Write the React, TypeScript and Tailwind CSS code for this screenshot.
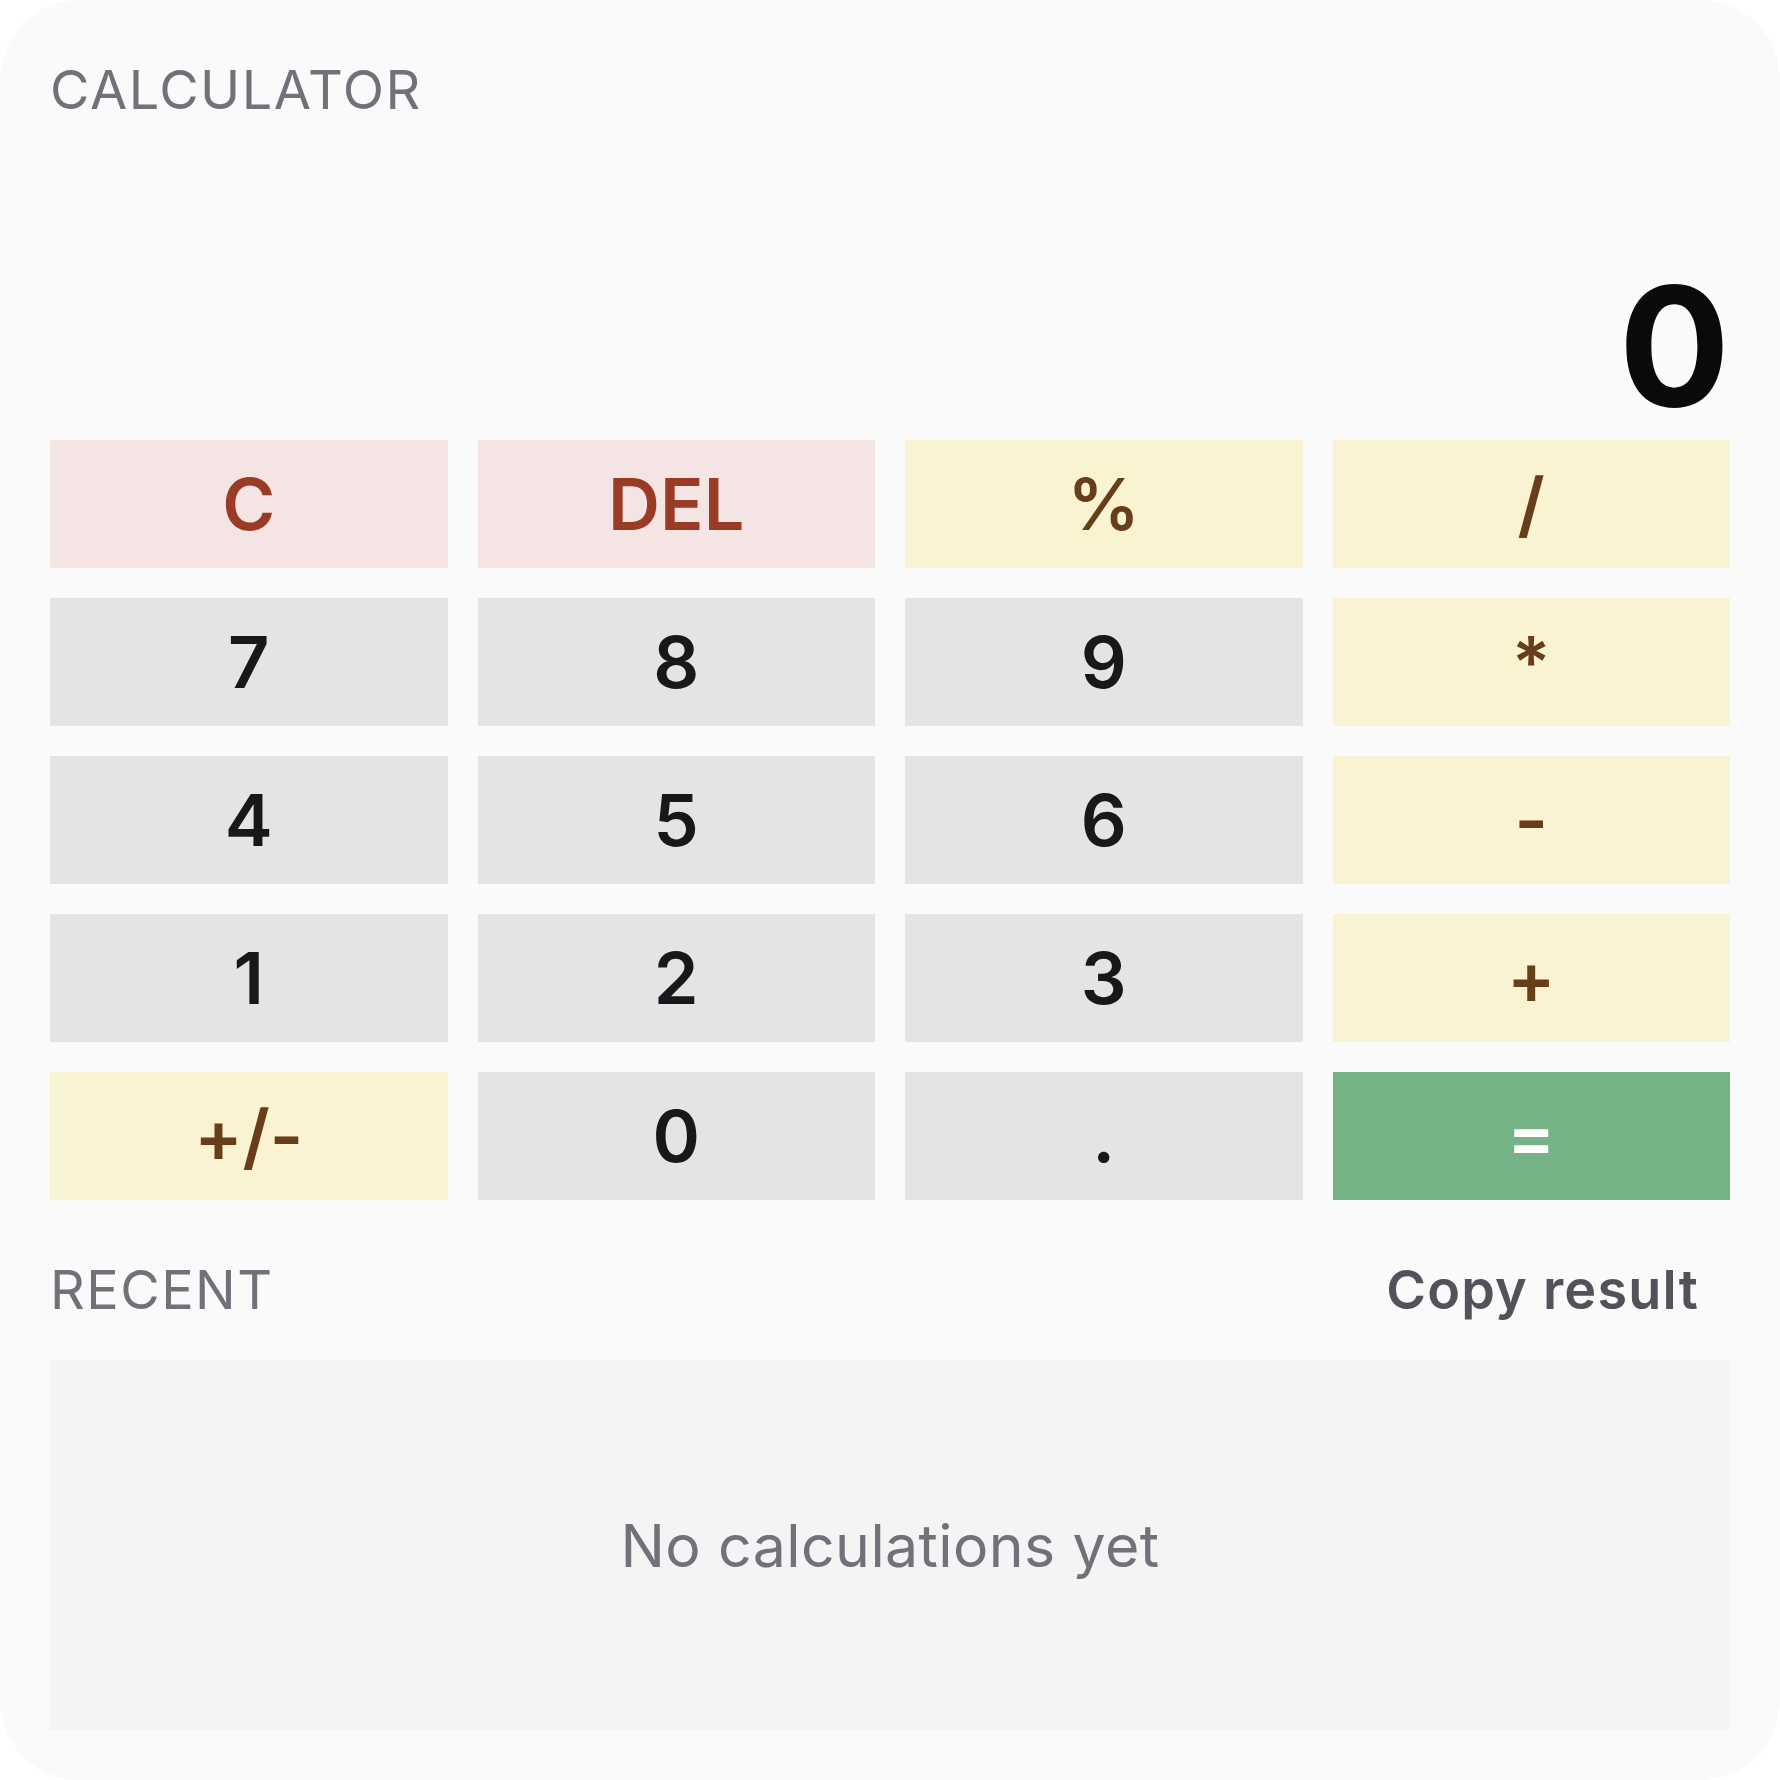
import React, { useState } from "react";

type Kind = "clear" | "op" | "num" | "eq";

const keys: { label: string; kind: Kind }[] = [
  { label: "C", kind: "clear" },
  { label: "DEL", kind: "clear" },
  { label: "%", kind: "op" },
  { label: "/", kind: "op" },
  { label: "7", kind: "num" },
  { label: "8", kind: "num" },
  { label: "9", kind: "num" },
  { label: "*", kind: "op" },
  { label: "4", kind: "num" },
  { label: "5", kind: "num" },
  { label: "6", kind: "num" },
  { label: "-", kind: "op" },
  { label: "1", kind: "num" },
  { label: "2", kind: "num" },
  { label: "3", kind: "num" },
  { label: "+", kind: "op" },
  { label: "+/-", kind: "op" },
  { label: "0", kind: "num" },
  { label: ".", kind: "num" },
  { label: "=", kind: "eq" },
];

const kindClass: Record<Kind, string> = {
  clear: "bg-[#f4e4e4] text-[#9a3b25]",
  op: "bg-[#f9f3d1] text-[#683d1a]",
  num: "bg-[#e4e4e7] text-[#18181b]",
  eq: "bg-[#75b387] text-white",
};

const App: React.FC = () => {
  const [display, setDisplay] = useState("0");
  const [history] = useState<string[]>([]);

  const handleKey = (label: string) => {
    if (label === "C") return setDisplay("0");
    if (label === "DEL") return setDisplay((d) => (d.length > 1 ? d.slice(0, -1) : "0"));
    if (/^[0-9]$/.test(label)) return setDisplay((d) => (d === "0" ? label : d + label));
  };

  return (
    <div className="w-[1780px] h-[1780px] bg-white font-['Inter','Liberation_Sans',sans-serif]">
      <div className="w-full h-full bg-[#fafafa] rounded-[80px] px-[50px] pt-[50px] pb-[50px] flex flex-col">
        {/* header */}
        <div className="h-[80px] flex items-center">
          <h1 className="text-[54px] leading-none font-normal tracking-[1.5px] text-[#71717a]">CALCULATOR</h1>
        </div>

        {/* display */}
        <div className="h-[310px] flex flex-col justify-end pb-[11px]">
          <div className="text-right text-[165px] leading-none font-bold text-[#0a0a0a]">{display}</div>
        </div>

        {/* keypad */}
        <div className="grid grid-cols-4 gap-[30px]">
          {keys.map((k) => (
            <button
              key={k.label}
              onClick={() => handleKey(k.label)}
              className={`h-[128px] flex items-center justify-center text-[72px] leading-none font-semibold ${kindClass[k.kind]}`}
            >
              {k.label}
            </button>
          ))}
        </div>

        {/* recent */}
        <div className="mt-[50px] h-[80px] flex items-center justify-between">
          <h2 className="text-[54px] leading-none font-normal tracking-[1.5px] text-[#71717a]">RECENT</h2>
          <button className="pl-[32px] pr-[31px] text-[54px] leading-none font-semibold tracking-[1.2px] text-[#52525b]">
            Copy result
          </button>
        </div>

        <div className="mt-[30px] h-[370px] bg-[#f4f4f5] flex items-center justify-center">
          {history.length === 0 ? (
            <p className="text-[59px] leading-none tracking-[0.4px] text-[#71717a]">No calculations yet</p>
          ) : (
            history.map((h) => <p key={h}>{h}</p>)
          )}
        </div>
      </div>
    </div>
  );
};

export default App;
